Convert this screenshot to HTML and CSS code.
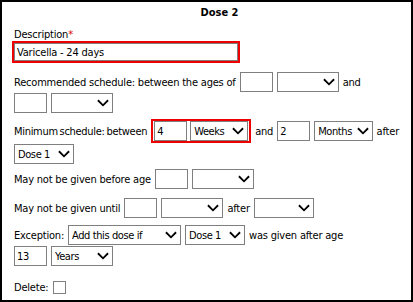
FILE: index.html
```html
<!DOCTYPE html>
<html lang="en">
<head>
    <meta charset="UTF-8">
    <title>Dose 2</title>
    <link rel="stylesheet" href="styles.css">
</head>
<body>
    <div class="panel">
        <div class="title">Dose 2</div>

        <!-- Description -->
        <div class="label">Description<span class="req">*</span></div>
        <input class="text desc flagged" type="text" value="Varicella - 24 days">

        <!-- Recommended schedule -->
        <div class="field rec">
            <div class="row">
                <span>Recommended schedule: between the ages of</span>
                <input class="text num" type="text">
                <span class="dd unit"><select><option></option></select><svg class="chev" viewBox="0 0 13 8"><path d="M1 1 L6.5 6.5 L12 1"/></svg></span>
                <span>and</span>
            </div>
            <div class="row">
                <input class="text num" type="text">
                <span class="dd unit"><select><option></option></select><svg class="chev" viewBox="0 0 13 8"><path d="M1 1 L6.5 6.5 L12 1"/></svg></span>
            </div>
        </div>

        <!-- Minimum schedule -->
        <div class="field min">
            <div class="row tall">
                <span class="tight">Minimum schedule: between</span>
                <span class="flag-box">
                    <input class="text num" type="text" value="4">
                    <span class="dd weeks"><select><option>Weeks</option></select><svg class="chev" viewBox="0 0 13 8"><path d="M1 1 L6.5 6.5 L12 1"/></svg></span>
                </span>
                <span>and</span>
                <input class="text num" type="text" value="2">
                <span class="dd unit"><select><option>Months</option></select><svg class="chev" viewBox="0 0 13 8"><path d="M1 1 L6.5 6.5 L12 1"/></svg></span>
                <span>after</span>
            </div>
            <div class="row">
                <span class="dd dose"><select><option>Dose 1</option></select><svg class="chev" viewBox="0 0 13 8"><path d="M1 1 L6.5 6.5 L12 1"/></svg></span>
            </div>
        </div>

        <!-- Before age -->
        <div class="field before">
            <div class="row">
                <span>May not be given before age</span>
                <input class="text num" type="text">
                <span class="dd unit"><select><option></option></select><svg class="chev" viewBox="0 0 13 8"><path d="M1 1 L6.5 6.5 L12 1"/></svg></span>
            </div>
        </div>

        <!-- Until -->
        <div class="field until">
            <div class="row">
                <span>May not be given until</span>
                <input class="text num" type="text">
                <span class="dd unit"><select><option></option></select><svg class="chev" viewBox="0 0 13 8"><path d="M1 1 L6.5 6.5 L12 1"/></svg></span>
                <span>after</span>
                <span class="dd after"><select><option></option></select><svg class="chev" viewBox="0 0 13 8"><path d="M1 1 L6.5 6.5 L12 1"/></svg></span>
            </div>
        </div>

        <!-- Exception -->
        <div class="field exception">
            <div class="row">
                <span>Exception:</span>
                <span class="dd cond"><select><option>Add this dose if</option></select><svg class="chev" viewBox="0 0 13 8"><path d="M1 1 L6.5 6.5 L12 1"/></svg></span>
                <span class="dd dose"><select><option>Dose 1</option></select><svg class="chev" viewBox="0 0 13 8"><path d="M1 1 L6.5 6.5 L12 1"/></svg></span>
                <span>was given after age</span>
            </div>
            <div class="row">
                <input class="text num" type="text" value="13">
                <span class="dd unit"><select><option>Years</option></select><svg class="chev" viewBox="0 0 13 8"><path d="M1 1 L6.5 6.5 L12 1"/></svg></span>
            </div>
        </div>

        <!-- Delete -->
        <div class="field delete">
            <div class="row">
                <span>Delete:</span>
                <span class="check"></span>
            </div>
        </div>
    </div>
</body>
</html>
```

FILE: styles.css
```css
* {
    box-sizing: border-box;
}

body {
    margin: 0;
    background-color: #ffffff;
    color: #000000;
    font-family: "DejaVu Sans Condensed", "DejaVu Sans", sans-serif;
    font-size: 11px;
    letter-spacing: -0.2px;
}

/* Outer frame */
.panel {
    width: 413px;
    height: 302px;
    border: 2px solid #000000;
    padding: 2px 12px 0 12px;
    overflow: hidden;
}

.title {
    font-weight: bold;
    text-align: center;
    line-height: 18px;
    padding-left: 26px;
    letter-spacing: 0;
}

.label {
    margin-top: 6px;
    line-height: 14px;
}

.req {
    color: #e00000;
}

/* Inputs */
.text {
    height: 20px;
    border: 1px solid #7f7f7f;
    padding: 0 2px;
    font-family: inherit;
    font-size: 11px;
    letter-spacing: -0.2px;
    color: #000000;
    background: #ffffff;
    margin: 0;
    outline: none;
}

.desc {
    display: block;
    width: 224px;
    height: 18px;
    margin-top: 1px;
}

.flagged {
    outline: 2px solid #ee0000;
}

.num {
    width: 33px;
}

/* Rows */
.field {
    margin-top: 11px;
}

.row {
    display: flex;
    align-items: center;
    gap: 4px;
    height: 20px;
    margin-bottom: 1px;
    white-space: nowrap;
}

.row.tall {
    height: 24px;
}

.tight {
    word-spacing: -1px;
    letter-spacing: -0.3px;
}

.min { margin-top: 6px; }
.before { margin-top: 5px; }
.until { margin-top: 9px; }
.exception { margin-top: 7px; }
.delete { margin-top: 11px; }

/* Red highlight around the minimum interval */
.flag-box {
    display: flex;
    gap: 3px;
    border: 2px solid #ee0000;
    padding: 0 1px;
}

/* Drop-downs */
.dd {
    position: relative;
    display: inline-block;
    height: 20px;
}

.dd select {
    appearance: none;
    -webkit-appearance: none;
    width: 100%;
    height: 20px;
    border: 1px solid #7f7f7f;
    border-radius: 0;
    background: #ffffff;
    padding: 0 0 0 3px;
    font-family: inherit;
    font-size: 11px;
    letter-spacing: -0.4px;
    color: #000000;
    margin: 0;
}

.chev {
    position: absolute;
    right: 4px;
    top: 6px;
    width: 12px;
    height: 8px;
    pointer-events: none;
    background: #ffffff;
}

.chev path {
    fill: none;
    stroke: #000000;
    stroke-width: 2;
}

.unit { width: 62px; }
.weeks { width: 58px; }
.dose { width: 60px; }
.after { width: 60px; }
.cond { width: 113px; }

.check {
    display: inline-block;
    width: 13px;
    height: 13px;
    border: 1px solid #7f7f7f;
    background: #ffffff;
    margin-left: 1px;
}
```
